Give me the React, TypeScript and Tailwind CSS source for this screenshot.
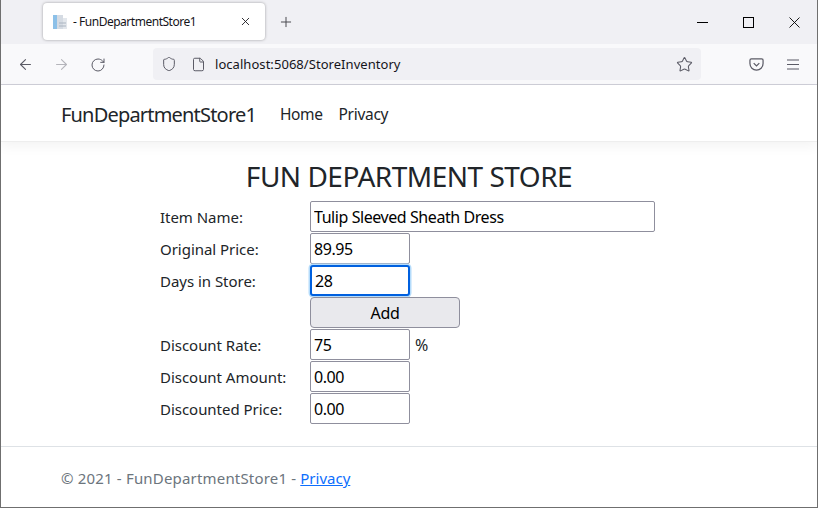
import { Plus, X, ArrowLeft, ArrowRight, RotateCw, Shield, File, Star } from "lucide-react";

const font = "font-['Noto_Sans',sans-serif]";

const fieldClass =
  "block h-[31px] w-[100px] rounded-[2px] border border-[#8f8f9d] bg-white px-[3px] text-[16px] tracking-[-0.43px] text-black outline-none";

function Row({ label, children }: { label?: string; children: React.ReactNode }) {
  return (
    <div className="flex h-8 items-start">
      <div className="w-[150px] pt-[5px] text-[15px] tracking-[-0.03px] text-[#212529]">{label}</div>
      {children}
    </div>
  );
}

function Field({ value, className = "" }: { value: string; className?: string }) {
  return <input readOnly value={value} className={`${fieldClass} ${className}`} />;
}

export default function App() {
  return (
    <div className={`${font} flex h-[508px] w-[818px] flex-col overflow-hidden border-x border-b border-[#6f6f6f] bg-white`}>
      {/* tab strip */}
      <div className="flex h-11 shrink-0 items-center bg-[#f0f0f4]">
        <div className="ml-[42px] mt-[-1px] flex h-[37px] w-[222px] items-center rounded-[4px] bg-white pl-[9px] pr-[13px] shadow-[0_0_3px_rgba(0,0,0,0.35)]">
          <svg width="16" height="16" viewBox="0 0 16 16" className="shrink-0">
            <rect x="1" y="1" width="4" height="14" fill="#8cc0e8" />
            <rect x="5" y="1" width="6" height="14" fill="#d5dbe3" />
            <path d="M11 4h4v11h-4z" fill="#e3e7ec" />
            <path d="M7 9h7M7 12h7" stroke="#aab4c0" />
          </svg>
          <span className="ml-[5px] flex-1 text-[12px] tracking-[-0.48px] text-[#15141a]">- FunDepartmentStore1</span>
          <X size={13} strokeWidth={1.6} className="text-[#15141a]" />
        </div>
        <Plus size={16} strokeWidth={1.5} className="ml-[13px] text-[#4a4a50]" />
        <div className="ml-auto flex items-center">
          <svg width="11" height="11" viewBox="0 0 11 11" className="mr-[35px]">
            <path d="M0 5.5h11" stroke="#000" />
          </svg>
          <svg width="11" height="11" viewBox="0 0 11 11" className="mr-[35px]">
            <rect x="0.5" y="0.5" width="10" height="10" fill="none" stroke="#000" />
          </svg>
          <svg width="11" height="11" viewBox="0 0 11 11" className="mr-[17px]">
            <path d="M0.5 0.5l10 10M10.5 0.5l-10 10" stroke="#000" strokeWidth="0.9" />
          </svg>
        </div>
      </div>

      {/* toolbar */}
      <div className="flex h-[41px] shrink-0 items-center border-b border-[#cfcfd8] bg-[#f9f9fb] pt-[1px]">
        <ArrowLeft size={17} strokeWidth={1.5} className="ml-4 text-[#5b5b66]" />
        <ArrowRight size={17} strokeWidth={1.5} className="ml-[19px] text-[#b5b5bb]" />
        <RotateCw size={16} strokeWidth={1.5} className="ml-[20px] text-[#5b5b66]" />
        <div className="ml-[47px] mt-[-1px] flex h-8 w-[548px] items-center rounded-[4px] bg-[#f0f0f4]">
          <Shield size={16} strokeWidth={1.5} className="ml-2 text-[#5b5b66]" />
          <File size={15} strokeWidth={1.6} className="ml-[14px] text-[#5b5b66]" />
          <span className="ml-[9px] pt-[2px] text-[13px] tracking-[0.05px] text-[#15141a]">localhost:5068/StoreInventory</span>
          <Star size={17} strokeWidth={1.5} className="ml-auto mr-2 text-[#5b5b66]" />
        </div>
        <svg width="15" height="15" viewBox="0 0 16 16" fill="none" className="ml-[48px] mt-[-1px] text-[#5b5b66]">
          <path d="M2.5 2h11A1.5 1.5 0 0 1 15 3.5V7a7 7 0 0 1-14 0V3.5A1.5 1.5 0 0 1 2.5 2z" stroke="currentColor" strokeWidth="1.3" />
          <path d="M5 6.5l3 3 3-3" stroke="currentColor" strokeWidth="1.3" />
        </svg>
        <svg width="12" height="11" viewBox="0 0 12 11" className="ml-[23px] mt-[-1px] text-[#5b5b66]">
          <path d="M0 1h12M0 5.5h12M0 10h12" stroke="currentColor" strokeWidth="1.1" />
        </svg>
      </div>

      {/* navbar */}
      <nav className="flex h-[57px] shrink-0 items-center border-b border-[#eeeeee] pl-[60px] pt-[3px] shadow-[0_4px_12px_rgba(0,0,0,0.05)]">
        <span className="text-[20px] tracking-[-0.81px] text-[#212529]">FunDepartmentStore1</span>
        <span className="ml-[24px] text-[15.5px] tracking-[-0.4px] text-[#212529]">Home</span>
        <span className="ml-4 text-[15.5px] tracking-[-0.3px] text-[#212529]">Privacy</span>
      </nav>

      {/* main */}
      <main className="flex-1 pt-[14px]">
        <h1 className="text-center text-[28px] leading-[40px] tracking-[-0.5px] text-[#212529]">FUN DEPARTMENT STORE</h1>
        <div className="ml-[159px] mt-[5px]">
          <Row label="Item Name:">
            <Field value="Tulip Sleeved Sheath Dress" className="w-[345px]" />
          </Row>
          <Row label="Original Price:">
            <Field value="89.95" />
          </Row>
          <Row label="Days in Store:">
            <Field value="28" className="rounded-[3px] border-2 border-[#0060df] px-[2px] shadow-[0_0_0_1.5px_#b5dcfb]" />
          </Row>
          <Row>
            <button className="h-[31px] w-[150px] rounded-[4px] border border-[#8f8f9d] bg-[#e9e9ed] text-[16px] tracking-[-0.35px] text-black">
              Add
            </button>
          </Row>
          <Row label="Discount Rate:">
            <Field value="75" />
            <span className="ml-[5px] pt-[4px] text-[16px] text-[#212529]">%</span>
          </Row>
          <Row label="Discount Amount:">
            <Field value="0.00" />
          </Row>
          <Row label="Discounted Price:">
            <Field value="0.00" />
          </Row>
        </div>
      </main>

      {/* footer */}
      <footer className="flex h-[61px] shrink-0 items-center border-t border-[#dee2e6] pl-[60px] pt-[3px] text-[15px] tracking-[0.18px] text-[#6c757d]">
        <span>© 2021 - FunDepartmentStore1 - </span>
        <a href="#" className="ml-[4px] tracking-[0px] text-[#0d6efd] underline">Privacy</a>
      </footer>
    </div>
  );
}
